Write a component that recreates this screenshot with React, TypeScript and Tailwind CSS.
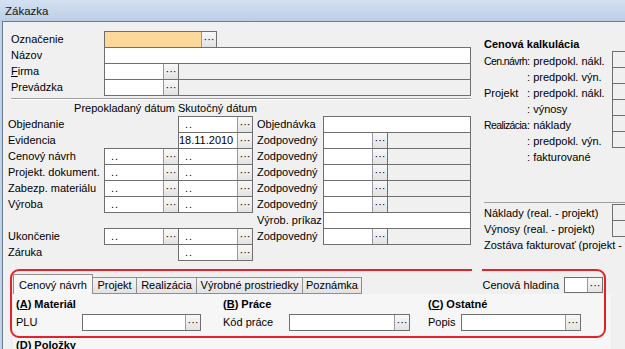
import type { ReactNode } from 'react';

const FRAME = 'border border-[#6f6f6f]';

function Dots() {
  return (
    <div className="w-[15px] h-full shrink-0 border-l border-[#9a9a9a] bg-gradient-to-b from-[#f8f8f8] to-[#e3e3e3] flex items-center justify-center text-[11px] leading-none">
      ···
    </div>
  );
}

// white (or coloured) input with a "..." button on its right
function Pick({ w, bg = 'bg-white', children }: { w: string; bg?: string; children?: ReactNode }) {
  return (
    <div className={`${w} h-[17px] shrink-0 flex ${FRAME}`}>
      <div className={`flex-1 min-w-0 ${bg} leading-[15px] overflow-hidden whitespace-nowrap`}>{children}</div>
      <Dots />
    </div>
  );
}

function Plain({ w, bg = 'bg-white', extra = '' }: { w: string; bg?: string; extra?: string }) {
  return <div className={`${w} h-[17px] shrink-0 ${bg} ${FRAME} ${extra}`} />;
}

function Empty() {
  return (
    <>
      <span className="pl-[6px]">.</span>
      <span className="pl-[1px]">.</span>
    </>
  );
}

// pick field + grey description field
function Lookup({ pick, rest }: { pick: string; rest: string }) {
  return (
    <div className="flex">
      <Pick w={pick} />
      <Plain w={rest} bg="bg-[#f0f0f0]" extra="-ml-px" />
    </div>
  );
}

function TopRow({ label, children }: { label: ReactNode; children: ReactNode }) {
  return (
    <div className="flex h-[16px]">
      <div className="w-[93px] shrink-0">{label}</div>
      {children}
    </div>
  );
}

type Cell = null | 'empty' | string;

function DateRow({ label, c1, c2, label2, right }: { label: string; c1: Cell; c2: Cell; label2?: string; right?: ReactNode }) {
  const cell = (c: Cell) =>
    c === null ? null : <Pick w="w-[75px]">{c === 'empty' ? <Empty /> : c}</Pick>;
  return (
    <div className="flex h-[16px]">
      <div className="w-[93px] shrink-0 -ml-[3px] mr-[3px] whitespace-nowrap">{label}</div>
      <div className="w-[74px] shrink-0">{cell(c1)}</div>
      <div className="w-[74px] shrink-0">{cell(c2)}</div>
      <div className="w-[71px] shrink-0 pl-[5px] whitespace-nowrap">{label2}</div>
      {right}
    </div>
  );
}

const zod = <Lookup pick="w-[65px]" rest="w-[84px]" />;

function CalcRow({ label, narrow, text, box }: { label?: string; narrow?: boolean; text: string; box?: boolean }) {
  return (
    <div className="flex h-[16px] whitespace-nowrap">
      <div className={`w-[43px] shrink-0 ${narrow ? 'text-[10.5px] tracking-[-0.6px]' : ''}`}>{label}</div>
      <div className="w-[85px] shrink-0">: {text}</div>
      {box && <div className="w-[40px] h-[17px] -mt-[2px] shrink-0 bg-[#f0f0f0] border border-[#6f6f6f]" />}
    </div>
  );
}

function Tab({ w, children }: { w: string; children: ReactNode }) {
  return (
    <div className={`${w} h-[17px] -ml-px shrink-0 border border-[#8e8f8f] bg-gradient-to-b from-[#f3f3f3] to-[#e2e2e2] flex items-center justify-center leading-none whitespace-nowrap`}>
      {children}
    </div>
  );
}

export default function App() {
  return (
    <div className="relative w-[625px] h-[349px] overflow-hidden bg-[#f0f0f0] font-['Liberation_Sans',Arial,sans-serif] text-[11px] leading-[16px] text-black">
      <div className="h-[21px] pl-[5px] flex items-center bg-gradient-to-b from-[#d4e1f1] to-[#bccfe7] text-[11.5px] text-[#151515]">
        Zákazka
      </div>

      <div className="flex h-[328px]">
        <div className="w-[2px] shrink-0 bg-[#bfd2ea]" />
        <div className="flex-1 min-w-0 overflow-hidden border-l border-t border-[#6c7a8c] pl-[8px] pt-[9px]">
          <div className="flex">
            {/* left block */}
            <div className="w-[460px] shrink-0">
              <TopRow label="Označenie">
                <Pick w="w-[113px]" bg="bg-[#fcd89a]" />
              </TopRow>
              <TopRow label="Názov">
                <Plain w="w-[367px]" />
              </TopRow>
              <TopRow label={<><u>F</u>irma</>}>
                <Lookup pick="w-[75px]" rest="w-[293px]" />
              </TopRow>
              <TopRow label="Prevádzka">
                <Lookup pick="w-[75px]" rest="w-[293px]" />
              </TopRow>
              <div className="mt-[3px] h-[2px] border-t border-b border-t-[#a0a0a0] border-b-white" />
              <div className="flex h-[16px] whitespace-nowrap">
                <div className="w-[167px] shrink-0 text-right pr-[3px]">Prepokladaný dátum</div>
                <div>Skutočný dátum</div>
              </div>
              <DateRow label="Objednanie" c1={null} c2="empty" label2="Objednávka" right={<Plain w="w-[148px]" />} />
              <DateRow label="Evidencia" c1={null} c2="18.11.2010" label2="Zodpovedný" right={zod} />
              <DateRow label="Cenový návrh" c1="empty" c2="empty" label2="Zodpovedný" right={zod} />
              <DateRow label="Projekt. dokument." c1="empty" c2="empty" label2="Zodpovedný" right={zod} />
              <DateRow label="Zabezp. materiálu" c1="empty" c2="empty" label2="Zodpovedný" right={zod} />
              <DateRow label="Výroba" c1="empty" c2="empty" label2="Zodpovedný" right={zod} />
              <DateRow label="" c1={null} c2={null} label2="Výrob. príkaz" right={<Plain w="w-[148px]" />} />
              <DateRow label="Ukončenie" c1="empty" c2="empty" label2="Zodpovedný" right={zod} />
              <DateRow label="Záruka" c1={null} c2="empty" />
            </div>

            {/* right block */}
            <div className="ml-[13px] flex-1 min-w-0 overflow-hidden pt-[5px]">
              <div className="h-[17px] leading-[17px] font-bold whitespace-nowrap">Cenová kalkulácia</div>
              <CalcRow label="Cen.návrh" narrow text="predpokl. nákl." box />
              <CalcRow text="predpokl. výn." box />
              <CalcRow label="Projekt" text="predpokl. nákl." box />
              <CalcRow text="výnosy" box />
              <CalcRow label="Realizácia" narrow text="náklady" box />
              <CalcRow text="predpokl. výn." box />
              <CalcRow text="fakturované" />
              <div className="mt-[37px] h-[1px] bg-[#a0a0a0] w-[200px]" />
              <div className="pt-[2px] whitespace-nowrap">
                <div className="flex h-[16px]">
                  <div className="w-[128px] shrink-0">Náklady (real. - projekt)</div>
                  <div className="w-[40px] h-[17px] -mt-px shrink-0 bg-[#f0f0f0] border border-[#6f6f6f]" />
                </div>
                <div className="flex h-[16px]">
                  <div className="w-[128px] shrink-0">Výnosy (real. - projekt)</div>
                  <div className="w-[40px] h-[17px] -mt-px shrink-0 bg-[#f0f0f0] border border-[#6f6f6f]" />
                </div>
                <div className="h-[16px]">Zostáva fakturovať (projekt - fakturované)</div>
              </div>
            </div>
          </div>

          {/* tabs */}
          <div className="mt-[14px] pl-[2px] flex items-end h-[20px] pr-[22px]">
            <div className="w-[80px] h-[20px] shrink-0 border-l border-t border-r border-[#8e8f8f] bg-[#f7f7f7] pt-[2px] text-center whitespace-nowrap relative z-10">
              Cenový návrh
            </div>
            <Tab w="w-[45px]">Projekt</Tab>
            <Tab w="w-[61px]">Realizácia</Tab>
            <Tab w="w-[107px]">Výrobné prostriedky</Tab>
            <Tab w="w-[60px]">Poznámka</Tab>
            <div className="ml-auto flex items-center mb-[1px]">
              <span className="mr-[5px] whitespace-nowrap">Cenová hladina</span>
              <div className="w-[39px] h-[16px] flex border border-[#6f6f6f]">
                <div className="flex-1 bg-white" />
                <Dots />
              </div>
            </div>
          </div>
          <div className="ml-[2px] mr-[14px] h-[60px] bg-[#f6f6f6] pl-[3px] pt-[2px]">
            <div className="flex h-[16px] font-bold whitespace-nowrap">
              <div className="w-[207px] shrink-0">
                (<u>A</u>) Materiál
              </div>
              <div className="w-[205px] shrink-0">
                (<u>B</u>) Práce
              </div>
              <div>
                (<u>C</u>) Ostatné
              </div>
            </div>
            <div className="mt-[2px] flex h-[16px] whitespace-nowrap">
              <div className="w-[66px] shrink-0">PLU</div>
              <Pick w="w-[119px]" />
              <div className="w-[22px] shrink-0" />
              <div className="w-[66px] shrink-0">Kód práce</div>
              <Pick w="w-[121px]" />
              <div className="w-[18px] shrink-0" />
              <div className="w-[33px] shrink-0">Popis</div>
              <Pick w="w-[120px]" />
            </div>
            <div className="mt-[7px] h-[16px] font-bold whitespace-nowrap">
              (<u>D</u>) Položky
            </div>
          </div>
        </div>
      </div>

      {/* red hand-drawn highlight over the tab area */}
      <div className="absolute left-[10px] top-[269px] w-[596px] h-[69px] border-2 border-[#e3222b] rounded-[9px] pointer-events-none" />
      <div className="absolute left-[472px] top-[267px] w-[10px] h-[5px] bg-[#f0f0f0]" />
    </div>
  );
}
